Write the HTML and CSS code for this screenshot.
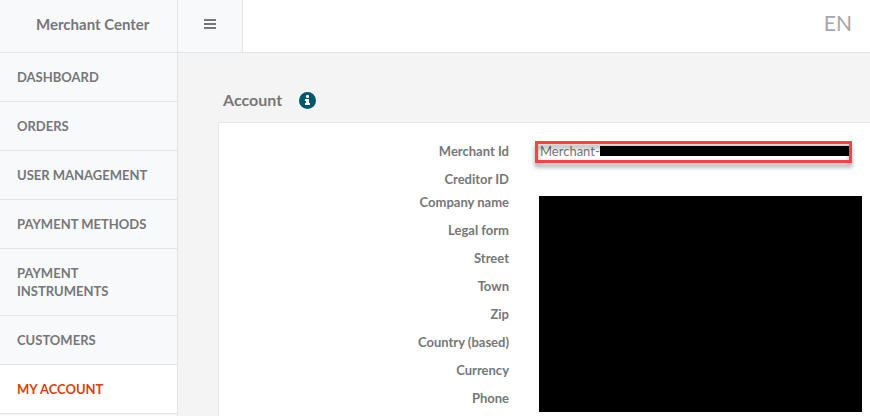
FILE: index.html
```html
<!DOCTYPE html>
<html lang="en">
  <head>
    <meta charset="utf-8" />
    <title>Merchant Center</title>
    <link rel="stylesheet" href="styles.css">
  </head>
  <body>
    <header class="topbar">
      <a class="brand" href="#">Merchant Center</a>
      <button type="button" class="menu-toggle" aria-label="Toggle menu">
        <svg width="12" height="10" viewBox="0 0 12 10" fill="currentColor">
          <rect width="12" height="2" />
          <rect y="4" width="12" height="2" />
          <rect y="8" width="12" height="2" />
        </svg>
      </button>
      <a class="language" href="#">EN</a>
    </header>

    <div class="page">
      <nav class="sidebar">
        <a href="#">Dashboard</a>
        <a href="#">Orders</a>
        <a href="#">User Management</a>
        <a href="#">Payment Methods</a>
        <a href="#">Payment Instruments</a>
        <a href="#">Customers</a>
        <a href="#" class="active">My Account</a>
      </nav>

      <main class="content">
        <div class="title">
          <h1>Account</h1>
          <svg class="info" width="17" height="17" viewBox="0 0 17 17">
            <circle cx="8.5" cy="8.5" r="8.5" fill="#00566b" />
            <rect x="7" y="3" width="3" height="3" rx="1" fill="#fff" />
            <path d="M6 7h4v4h1v2H6v-2h1V9H6z" fill="#fff" />
          </svg>
        </div>

        <section class="card">
          <table>
            <tr>
              <th scope="row">Merchant Id</th>
              <td>
                <div class="merchant-id">Merchant-<span class="mask"></span></div>
              </td>
            </tr>
            <tr class="tight">
              <th scope="row">Creditor ID</th>
              <td></td>
            </tr>
            <tr>
              <th scope="row">Company name</th>
              <td rowspan="8" class="hidden-data"><div class="mask-block"></div></td>
            </tr>
            <tr><th scope="row">Legal form</th></tr>
            <tr><th scope="row">Street</th></tr>
            <tr><th scope="row">Town</th></tr>
            <tr><th scope="row">Zip</th></tr>
            <tr><th scope="row">Country (based)</th></tr>
            <tr><th scope="row">Currency</th></tr>
            <tr><th scope="row">Phone</th></tr>
          </table>
        </section>
      </main>
    </div>
  </body>
</html>
```
FILE: styles.css
```css
* {
  box-sizing: border-box;
}

body {
  display: flex;
  flex-direction: column;
  min-height: 100vh;
  margin: 0;
  font-family: Lato, "Liberation Sans", sans-serif;
  font-size: 13px;
  line-height: 18px;
  color: #757779;
  background-color: #f4f4f4;
}

a {
  color: inherit;
  text-decoration: none;
}

.topbar {
  display: flex;
  height: 53px;
  background-color: #fff;
  border-bottom: 1px solid #e2e4e6;
}

.brand {
  display: flex;
  align-items: center;
  width: 178px;
  padding: 0 0 4px 36px;
  font-size: 15px;
  font-weight: bold;
  background-color: #f8f9fb;
  border-right: 1px solid #e2e4e6;
}

.menu-toggle {
  display: flex;
  align-items: center;
  justify-content: center;
  width: 65px;
  padding: 0 0 4px;
  color: #757779;
  background-color: #f8f9fb;
  border: none;
  border-right: 1px solid #e2e4e6;
  cursor: pointer;
}

.language {
  display: flex;
  align-items: center;
  margin-left: auto;
  padding: 0 18px 6px 0;
  font-size: 21px;
  color: #a5a7aa;
}

.page {
  display: flex;
  flex: 1;
}

.sidebar {
  flex: none;
  width: 178px;
  background-color: #f8f9fb;
  border-right: 1px solid #e2e4e6;
}

.sidebar a {
  display: block;
  padding: 15px 24px 15px 17px;
  font-weight: bold;
  text-transform: uppercase;
  border-bottom: 1px solid #e2e4e6;
}

.sidebar .active {
  color: #d9420b;
  background-color: #fff;
}

.content {
  display: flex;
  flex: 1;
  flex-direction: column;
  padding: 35px 0 0 40px;
}

.title {
  display: flex;
  align-items: center;
  gap: 17px;
  height: 24px;
  margin-bottom: 10px;
  padding-left: 5px;
}

h1 {
  margin: 0;
  font-size: 16px;
}

.card {
  flex: 1;
  padding-top: 14px;
  background-color: #fff;
  border: 1px solid #e2e4e6;
  border-width: 1px 0 0 1px;
  border-radius: 2px 0 0 0;
}

table {
  width: 100%;
  border-collapse: collapse;
  table-layout: fixed;
}

th {
  width: 320px;
  padding: 5px 30px 5px 0;
  text-align: right;
}

td {
  padding: 0 8px 0 0;
}

.tight th {
  padding-bottom: 0;
}

.merchant-id {
  position: relative;
  display: flex;
  align-items: center;
  margin-right: 10px;
  padding-left: 1px;
}

/* red frame drawn over the value */
.merchant-id::after {
  content: "";
  position: absolute;
  inset: -1px 0 -3px -4px;
  border: 3px solid #fb4141;
  filter: drop-shadow(0 4px 2px rgba(0, 0, 0, 0.4));
}

.mask {
  flex: 1;
  height: 10px;
  margin-right: 3px;
  background-color: #000;
}

.hidden-data {
  padding-top: 8px;
  vertical-align: top;
}

.mask-block {
  height: 216px;
  background-color: #000;
}
```
